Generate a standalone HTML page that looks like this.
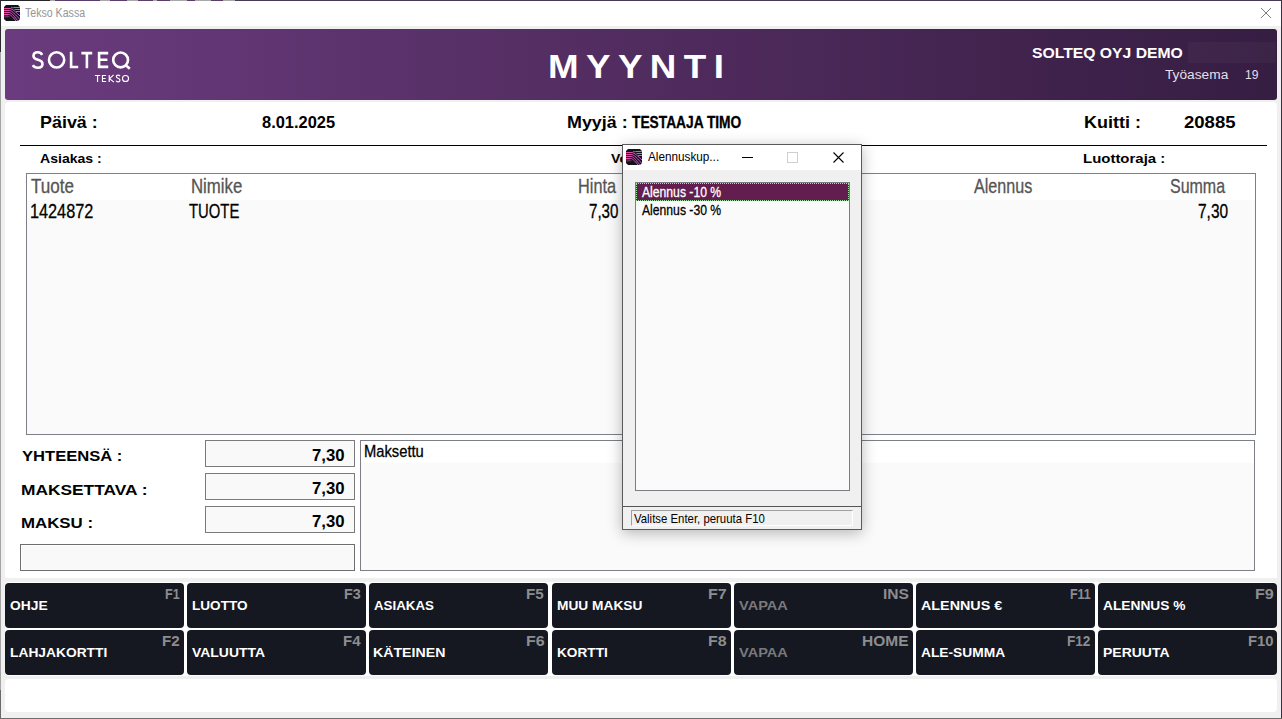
<!DOCTYPE html>
<html><head><meta charset="utf-8"><style>
*{margin:0;padding:0;box-sizing:border-box}
html,body{width:1282px;height:719px;overflow:hidden;background:#f0f0f0;position:relative;font-family:"Liberation Sans",sans-serif}
.a{position:absolute}
.t{position:absolute;white-space:nowrap;line-height:1;transform-origin:0 0}
.btn{position:absolute;background:#151820;border-radius:4px}
</style></head><body>
<div class="a" style="left:0;top:0;width:1282px;height:26px;background:#fff"></div>
<div class="a" style="left:4px;top:5px;width:16px;height:16px"><svg width="16" height="16" viewBox="0 0 16 16" shape-rendering="geometricPrecision"><defs><linearGradient id="ig1" x1="0" y1="0" x2="16" y2="0" gradientUnits="userSpaceOnUse"><stop offset="0" stop-color="#e8489c"/><stop offset="1" stop-color="#c95ee8"/></linearGradient><radialGradient id="gl1" cx="3" cy="11" r="5" gradientUnits="userSpaceOnUse"><stop offset="0" stop-color="#e0509c" stop-opacity="0.55"/><stop offset="1" stop-color="#e0509c" stop-opacity="0"/></radialGradient></defs><path d="M2 0 H14 L16 2 V14 L14 16 H2 L0 14 V2 Z" fill="#12131a"/><g stroke="url(#ig1)" stroke-width="1" fill="none"><path d="M0 3.5 H5 C8 3.5 9.5 5 16 11"/><path d="M0 5.5 H5 C7.5 5.5 9 7 15.5 14"/><path d="M0 7.5 H5 C7 7.5 8.5 9 14 16"/><path d="M0 9.5 H4.5 C6.5 9.5 8 11 12 16"/><path d="M10 2.5 H16"/><path d="M10.5 4.5 H16"/><path d="M12 6.5 H16"/><path d="M7 2.5 C8 2.5 9 3 10 2.5"/></g><path d="M0 10 C3 10.2 5 10.5 7 12 L0 13 Z" fill="url(#gl1)"/></svg></div>
<svg class="a" style="left:1260px;top:7px" width="12" height="12" viewBox="0 0 12 12"><path d="M1 1 L11 11 M11 1 L1 11" stroke="#7a7a7a" stroke-width="1" fill="none"/></svg>
<div class="a" style="left:5px;top:29px;width:1272px;height:71px;border-radius:3px;background:linear-gradient(90deg,#6a3b7e 0%,#512c5f 50%,#361d42 100%)"></div>
<div class="a" style="left:1188px;top:42px;width:88px;height:21px;background:rgba(255,255,255,0.03)"></div>
<div class="a" style="left:5px;top:102px;width:1272px;height:476px;border-radius:4px 4px 0 0;background:#fff"></div>
<div class="a" style="left:20px;top:145px;width:1247px;height:1px;background:#000"></div>
<div class="a" style="left:26px;top:173px;width:1230px;height:262px;border:1px solid #7c7f85;background:#fafafa"></div>
<div class="a" style="left:27px;top:174px;width:1228px;height:26px;background:#fff"></div>
<div class="a" style="left:205px;top:440px;width:150px;height:27px;border:1px solid #7a7a7a;background:#f9f9f9"></div>
<div class="a" style="left:205px;top:473px;width:150px;height:27px;border:1px solid #7a7a7a;background:#f9f9f9"></div>
<div class="a" style="left:205px;top:506px;width:150px;height:27px;border:1px solid #7a7a7a;background:#f9f9f9"></div>
<div class="a" style="left:20px;top:544px;width:335px;height:27px;border:1px solid #6e6e6e;background:#f9f9f9;box-shadow:inset 1px 1px 0 #fff"></div>
<div class="a" style="left:360px;top:440px;width:895px;height:131px;border:1px solid #7c7f85;background:#fafafa"></div>
<div class="a" style="left:361px;top:441px;width:893px;height:22px;background:#fff"></div>
<div class="a" style="left:5px;top:582px;width:1272px;height:94px;border-radius:4px;background:#fff"></div>
<div class="btn" style="left:5px;top:583px;width:179px;height:45px"></div><div class="btn" style="left:187px;top:583px;width:179px;height:45px"></div><div class="btn" style="left:369px;top:583px;width:179px;height:45px"></div><div class="btn" style="left:552px;top:583px;width:179px;height:45px"></div><div class="btn" style="left:734px;top:583px;width:179px;height:45px"></div><div class="btn" style="left:916px;top:583px;width:179px;height:45px"></div><div class="btn" style="left:1098px;top:583px;width:179px;height:45px"></div><div class="btn" style="left:5px;top:630px;width:179px;height:45px"></div><div class="btn" style="left:187px;top:630px;width:179px;height:45px"></div><div class="btn" style="left:369px;top:630px;width:179px;height:45px"></div><div class="btn" style="left:552px;top:630px;width:179px;height:45px"></div><div class="btn" style="left:734px;top:630px;width:179px;height:45px"></div><div class="btn" style="left:916px;top:630px;width:179px;height:45px"></div><div class="btn" style="left:1098px;top:630px;width:179px;height:45px"></div>
<div class="a" style="left:5px;top:679px;width:1272px;height:33px;border-radius:4px;background:#fff"></div>
<svg class="a" style="left:0;top:0" width="140" height="90" viewBox="0 0 140 90"><g fill="none" stroke="#fff" stroke-width="2.6" stroke-linejoin="miter" stroke-linecap="butt"><path d="M42.2 54.9 C41.2 53.1 39.6 52.3 37.8 52.3 C35.3 52.3 33.5 53.7 33.5 55.9 C33.5 58.3 35.6 59.1 38 59.8 C40.6 60.5 42.5 61.5 42.5 64 C42.5 66.3 40.6 67.7 37.9 67.7 C35.6 67.7 33.8 66.8 32.8 65.1"/><circle cx="56.6" cy="59.9" r="7.6"/><path d="M71.1 51.7 V67 H78.2"/><path d="M81.4 53.1 H92.2 M86.9 53.1 V68.2"/><path d="M108.2 53.1 H99.1 V66.9 H108.2 M99.1 59.8 H107.4"/><circle cx="120.6" cy="59.95" r="7.4"/><path d="M125.6 65 L129.8 68.8"/></g><g fill="none" stroke="#fff" stroke-width="1.15"><path d="M94.9 75.5 H100.2 M97.55 75.5 V82.1"/><path d="M106.1 75.5 H102.45 V81.5 H106.1 M102.45 78.5 H105.6"/><path d="M109.2 74.9 V82.1 M113.6 74.9 L109.6 78.7 L113.9 82.1"/><path d="M120 76.1 C119.6 75.4 118.9 75.1 118 75.1 C116.9 75.1 116.3 75.7 116.3 76.6 C116.3 78.7 120 77.8 120 80.3 C120 81.3 119.2 81.9 118 81.9 C117.1 81.9 116.4 81.5 116 80.8"/><circle cx="125.5" cy="78.5" r="3.05"/></g></svg>
<div class="t" id="tt" style="left:25.00px;top:6.93px;font-size:12.00px;font-weight:400;color:#959595;transform:scaleX(0.8830);">Tekso Kassa</div><div class="t" id="myynti" style="left:548.00px;top:49.70px;font-size:33.43px;font-weight:700;color:#fff;transform:scaleX(1.1000);letter-spacing:6.727px;">MYYNTI</div><div class="t" id="demo" style="left:1032.00px;top:44.76px;font-size:15.41px;font-weight:700;color:#fff;transform:scaleX(1.0203);">SOLTEQ OYJ DEMO</div><div class="t" id="tyo" style="left:1165.00px;top:67.93px;font-size:13.08px;font-weight:400;color:#e6dfe9;transform:scaleX(1.0492);">Työasema</div><div class="t" id="n19" style="left:1245.08px;top:67.93px;font-size:13.08px;font-weight:400;color:#e6dfe9;transform:scaleX(0.9231);">19</div><div class="t" id="paiva" style="left:39.83px;top:115.47px;font-size:15.99px;font-weight:700;color:#000;transform:scaleX(1.1204);">Päivä :</div><div class="t" id="date" style="left:262.48px;top:115.47px;font-size:15.99px;font-weight:700;color:#000;transform:scaleX(1.0282);">8.01.2025</div><div class="t" id="myyja" style="left:567.49px;top:115.29px;font-size:15.84px;font-weight:700;color:#000;transform:scaleX(1.1301);">Myyjä :</div><div class="t" id="timo" style="left:632.02px;top:115.29px;font-size:15.84px;font-weight:700;color:#000;transform:scaleX(0.8690);-webkit-text-stroke:0.3px currentColor;">TESTAAJA TIMO</div><div class="t" id="kuitti" style="left:1083.88px;top:115.47px;font-size:15.99px;font-weight:700;color:#000;transform:scaleX(1.1240);">Kuitti :</div><div class="t" id="kno" style="left:1184.00px;top:115.47px;font-size:15.99px;font-weight:700;color:#000;transform:scaleX(1.1599);">20885</div><div class="t" id="asiakas" style="left:40.00px;top:152.28px;font-size:13.37px;font-weight:700;color:#000;transform:scaleX(1.0527);">Asiakas :</div><div class="t" id="ve" style="left:610.70px;top:152.28px;font-size:13.37px;font-weight:700;color:#000;transform:scaleX(1.05)">Ve</div><div class="t" id="luotto" style="left:1083.37px;top:151.63px;font-size:13.66px;font-weight:700;color:#000;transform:scaleX(1.0951);">Luottoraja :</div><div class="t" id="h1" style="left:30.57px;top:176.71px;font-size:19.48px;font-weight:400;color:#555;transform:scaleX(0.8760);-webkit-text-stroke:0.3px currentColor;">Tuote</div><div class="t" id="h2" style="left:191.14px;top:176.71px;font-size:19.48px;font-weight:400;color:#555;transform:scaleX(0.8621);-webkit-text-stroke:0.3px currentColor;">Nimike</div><div class="t" id="h3" style="left:578.42px;top:176.71px;font-size:19.48px;font-weight:400;color:#555;transform:scaleX(0.8373);-webkit-text-stroke:0.3px currentColor;">Hinta</div><div class="t" id="h4" style="left:974.42px;top:176.71px;font-size:19.48px;font-weight:400;color:#555;transform:scaleX(0.8286);-webkit-text-stroke:0.3px currentColor;">Alennus</div><div class="t" id="h5" style="left:1170.43px;top:176.71px;font-size:19.48px;font-weight:400;color:#555;transform:scaleX(0.8209);-webkit-text-stroke:0.3px currentColor;">Summa</div><div class="t" id="d1" style="left:30.19px;top:200.60px;font-size:20.20px;font-weight:400;color:#000;transform:scaleX(0.8052);-webkit-text-stroke:0.3px currentColor;">1424872</div><div class="t" id="d2" style="left:188.82px;top:200.60px;font-size:20.20px;font-weight:400;color:#000;transform:scaleX(0.7353);-webkit-text-stroke:0.3px currentColor;">TUOTE</div><div class="t" id="d3" style="left:588.85px;top:200.60px;font-size:20.20px;font-weight:400;color:#000;transform:scaleX(0.7489);-webkit-text-stroke:0.3px currentColor;">7,30</div><div class="t" id="d5" style="left:1197.59px;top:200.60px;font-size:20.20px;font-weight:400;color:#000;transform:scaleX(0.7656);-webkit-text-stroke:0.3px currentColor;">7,30</div><div class="t" id="yht" style="left:21.67px;top:447.91px;font-size:15.41px;font-weight:700;color:#000;transform:scaleX(1.0753);">YHTEENSÄ :</div><div class="t" id="mkv" style="left:20.65px;top:481.58px;font-size:15.26px;font-weight:700;color:#000;transform:scaleX(1.1365);">MAKSETTAVA :</div><div class="t" id="mks" style="left:20.68px;top:514.76px;font-size:15.41px;font-weight:700;color:#000;transform:scaleX(1.0935);">MAKSU :</div><div class="t" id="v0" style="left:312.00px;top:448.11px;font-size:15.70px;font-weight:700;color:#000;transform:scaleX(1.0667);">7,30</div><div class="t" id="v1" style="left:312.00px;top:481.11px;font-size:15.70px;font-weight:700;color:#000;transform:scaleX(1.0667);">7,30</div><div class="t" id="v2" style="left:312.00px;top:514.11px;font-size:15.70px;font-weight:700;color:#000;transform:scaleX(1.0667);">7,30</div><div class="t" id="maksettu" style="left:363.96px;top:443.20px;font-size:17.01px;font-weight:400;color:#000;transform:scaleX(0.8666);-webkit-text-stroke:0.3px currentColor;">Maksettu</div><div class="t" id="b00" style="left:10.12px;top:598.93px;font-size:13.08px;font-weight:700;color:#fff;transform:scaleX(1.0576);">OHJE</div><div class="t" id="k00" style="left:165.13px;top:587.34px;font-size:14.24px;font-weight:700;color:#8c8d90;transform:scaleX(0.8872);">F1</div><div class="t" id="b01" style="left:192.16px;top:598.93px;font-size:13.08px;font-weight:700;color:#fff;transform:scaleX(1.0385);">LUOTTO</div><div class="t" id="k01" style="left:344.48px;top:587.34px;font-size:14.24px;font-weight:700;color:#8c8d90;transform:scaleX(1.0067);">F3</div><div class="t" id="b02" style="left:374.18px;top:598.93px;font-size:13.08px;font-weight:700;color:#fff;transform:scaleX(1.0171);">ASIAKAS</div><div class="t" id="k02" style="left:526.18px;top:587.34px;font-size:14.24px;font-weight:700;color:#8c8d90;transform:scaleX(1.0706);">F5</div><div class="t" id="b03" style="left:557.47px;top:598.93px;font-size:13.08px;font-weight:700;color:#fff;transform:scaleX(1.0490);">MUU MAKSU</div><div class="t" id="k03" style="left:708.17px;top:587.34px;font-size:14.24px;font-weight:700;color:#8c8d90;transform:scaleX(1.1289);">F7</div><div class="t" id="b04" style="left:739.22px;top:598.93px;font-size:13.08px;font-weight:700;color:#7a7a7c;transform:scaleX(1.1147);">VAPAA</div><div class="t" id="k04" style="left:883.31px;top:587.34px;font-size:14.24px;font-weight:700;color:#8c8d90;transform:scaleX(1.0915);">INS</div><div class="t" id="b05" style="left:921.00px;top:598.93px;font-size:13.08px;font-weight:700;color:#fff;transform:scaleX(1.0950);">ALENNUS €</div><div class="t" id="k05" style="left:1070.34px;top:587.34px;font-size:14.24px;font-weight:700;color:#8c8d90;transform:scaleX(0.8751);">F11</div><div class="t" id="b06" style="left:1103.00px;top:598.93px;font-size:13.08px;font-weight:700;color:#fff;transform:scaleX(1.0510);">ALENNUS %</div><div class="t" id="k06" style="left:1254.52px;top:587.34px;font-size:14.24px;font-weight:700;color:#8c8d90;transform:scaleX(1.1348);">F9</div><div class="t" id="b10" style="left:10.10px;top:646.28px;font-size:13.37px;font-weight:700;color:#fff;transform:scaleX(1.0321);">LAHJAKORTTI</div><div class="t" id="k10" style="left:162.18px;top:633.67px;font-size:14.10px;font-weight:700;color:#8c8d90;transform:scaleX(1.0730);">F2</div><div class="t" id="b11" style="left:192.21px;top:646.28px;font-size:13.37px;font-weight:700;color:#fff;transform:scaleX(1.0433);">VALUUTTA</div><div class="t" id="k11" style="left:343.26px;top:633.67px;font-size:14.10px;font-weight:700;color:#8c8d90;transform:scaleX(1.0625);">F4</div><div class="t" id="b12" style="left:373.15px;top:646.28px;font-size:13.37px;font-weight:700;color:#fff;transform:scaleX(1.0597);">KÄTEINEN</div><div class="t" id="k12" style="left:525.51px;top:633.67px;font-size:14.10px;font-weight:700;color:#8c8d90;transform:scaleX(1.1368);">F6</div><div class="t" id="b13" style="left:557.48px;top:646.28px;font-size:13.37px;font-weight:700;color:#fff;transform:scaleX(1.0214);">KORTTI</div><div class="t" id="k13" style="left:708.17px;top:633.67px;font-size:14.10px;font-weight:700;color:#8c8d90;transform:scaleX(1.1289);">F8</div><div class="t" id="b14" style="left:739.22px;top:646.28px;font-size:13.37px;font-weight:700;color:#7a7a7c;transform:scaleX(1.0902);">VAPAA</div><div class="t" id="k14" style="left:862.23px;top:633.67px;font-size:14.10px;font-weight:700;color:#8c8d90;transform:scaleX(1.0988);">HOME</div><div class="t" id="b15" style="left:921.00px;top:646.28px;font-size:13.37px;font-weight:700;color:#fff;transform:scaleX(1.0304);">ALE-SUMMA</div><div class="t" id="k15" style="left:1067.48px;top:633.67px;font-size:14.10px;font-weight:700;color:#8c8d90;transform:scaleX(0.9644);">F12</div><div class="t" id="b16" style="left:1103.00px;top:646.28px;font-size:13.37px;font-weight:700;color:#fff;transform:scaleX(1.0469);">PERUUTA</div><div class="t" id="k16" style="left:1248.06px;top:633.67px;font-size:14.10px;font-weight:700;color:#8c8d90;transform:scaleX(1.0480);">F10</div>
<div class="a" id="dlg" style="left:622px;top:144px;width:240px;height:386px;border:1px solid #5a5a5a;background:#f0f0f0;box-shadow:0 3px 14px rgba(0,0,0,0.28);overflow:hidden">
 <div class="a" style="left:0;top:0;width:238px;height:25px;background:#fff"></div>
 <div class="a" style="left:3px;top:4px;width:16px;height:16px"><svg width="16" height="16" viewBox="0 0 16 16" shape-rendering="geometricPrecision"><defs><linearGradient id="ig2" x1="0" y1="0" x2="16" y2="0" gradientUnits="userSpaceOnUse"><stop offset="0" stop-color="#e8489c"/><stop offset="1" stop-color="#c95ee8"/></linearGradient><radialGradient id="gl2" cx="3" cy="11" r="5" gradientUnits="userSpaceOnUse"><stop offset="0" stop-color="#e0509c" stop-opacity="0.55"/><stop offset="1" stop-color="#e0509c" stop-opacity="0"/></radialGradient></defs><path d="M2 0 H14 L16 2 V14 L14 16 H2 L0 14 V2 Z" fill="#12131a"/><g stroke="url(#ig2)" stroke-width="1" fill="none"><path d="M0 3.5 H5 C8 3.5 9.5 5 16 11"/><path d="M0 5.5 H5 C7.5 5.5 9 7 15.5 14"/><path d="M0 7.5 H5 C7 7.5 8.5 9 14 16"/><path d="M0 9.5 H4.5 C6.5 9.5 8 11 12 16"/><path d="M10 2.5 H16"/><path d="M10.5 4.5 H16"/><path d="M12 6.5 H16"/><path d="M7 2.5 C8 2.5 9 3 10 2.5"/></g><path d="M0 10 C3 10.2 5 10.5 7 12 L0 13 Z" fill="url(#gl2)"/></svg></div>
 <div class="a" style="left:119px;top:12px;width:11px;height:1px;background:#000"></div>
 <div class="a" style="left:164px;top:7px;width:11px;height:11px;border:1px solid #cfcfcf"></div>
 <svg class="a" style="left:210px;top:7px" width="11" height="11" viewBox="0 0 11 11"><path d="M0.5 0.5 L10.5 10.5 M10.5 0.5 L0.5 10.5" stroke="#000" stroke-width="1.1" fill="none"/></svg>
 <div class="a" style="left:12px;top:37px;width:215px;height:309px;border:1px solid #7a7d82;background:#fafafa"></div>
 <div class="a" style="left:13px;top:38px;width:213px;height:18px;background:#631d4f;outline:1px dotted #9fe0a0;outline-offset:-1px"></div>
 <div class="a" style="left:0;top:361px;width:238px;height:1px;background:#555"></div>
 <div class="a" style="left:8px;top:365px;width:222px;height:16px;border-top:1px solid #a0a0a0;border-left:1px solid #a0a0a0;border-bottom:1px solid #fff;border-right:1px solid #fff"></div>
</div>
<div class="t" id="dt" style="left:648.00px;top:150.25px;font-size:13.08px;font-weight:400;color:#000;transform:scaleX(0.8978);">Alennuskup...</div><div class="t" id="li1" style="left:641.76px;top:183.58px;font-size:15.26px;font-weight:400;color:#fff;transform:scaleX(0.7980);-webkit-text-stroke:0.3px currentColor;">Alennus -10 %</div><div class="t" id="li2" style="left:641.76px;top:201.58px;font-size:15.26px;font-weight:400;color:#000;transform:scaleX(0.7980);-webkit-text-stroke:0.3px currentColor;">Alennus -30 %</div><div class="t" id="st" style="left:634.48px;top:513.51px;font-size:11.92px;font-weight:400;color:#000;transform:scaleX(0.9564);">Valitse Enter, peruuta F10</div>
<div class="a" style="left:0px;top:0;width:50px;height:1px;background:#26262a"></div><div class="a" style="left:50px;top:0;width:5px;height:1px;background:#a8a8a8"></div><div class="a" style="left:55px;top:0;width:45px;height:1px;background:#5a3d6c"></div><div class="a" style="left:100px;top:0;width:10px;height:1px;background:#a8a8a8"></div><div class="a" style="left:110px;top:0;width:17px;height:1px;background:#5a3d6c"></div><div class="a" style="left:127px;top:0;width:11px;height:1px;background:#a8a8a8"></div><div class="a" style="left:138px;top:0;width:15px;height:1px;background:#5a3d6c"></div><div class="a" style="left:153px;top:0;width:4px;height:1px;background:#a8a8a8"></div><div class="a" style="left:157px;top:0;width:13px;height:1px;background:#5a3d6c"></div><div class="a" style="left:170px;top:0;width:17px;height:1px;background:#a8a8a8"></div><div class="a" style="left:187px;top:0;width:8px;height:1px;background:#5a3d6c"></div><div class="a" style="left:195px;top:0;width:16px;height:1px;background:#a8a8a8"></div><div class="a" style="left:211px;top:0;width:12px;height:1px;background:#5a3d6c"></div><div class="a" style="left:223px;top:0;width:12px;height:1px;background:#a8a8a8"></div><div class="a" style="left:235px;top:0;width:1047px;height:1px;background:#4a3a58"></div>
<div class="a" style="left:0;top:0;width:1px;height:52px;background:#2c2c30"></div><div class="a" style="left:0;top:52px;width:1px;height:667px;background:#a4a4a4"></div><div class="a" style="left:0;top:690px;width:1px;height:29px;background:#6a6a6a"></div>
<div class="a" style="left:1281px;top:0;width:1px;height:719px;background:#3b2c47"></div>
<div class="a" style="left:0;top:718px;width:1282px;height:1px;background:#6e6e6e"></div>
</body></html>
